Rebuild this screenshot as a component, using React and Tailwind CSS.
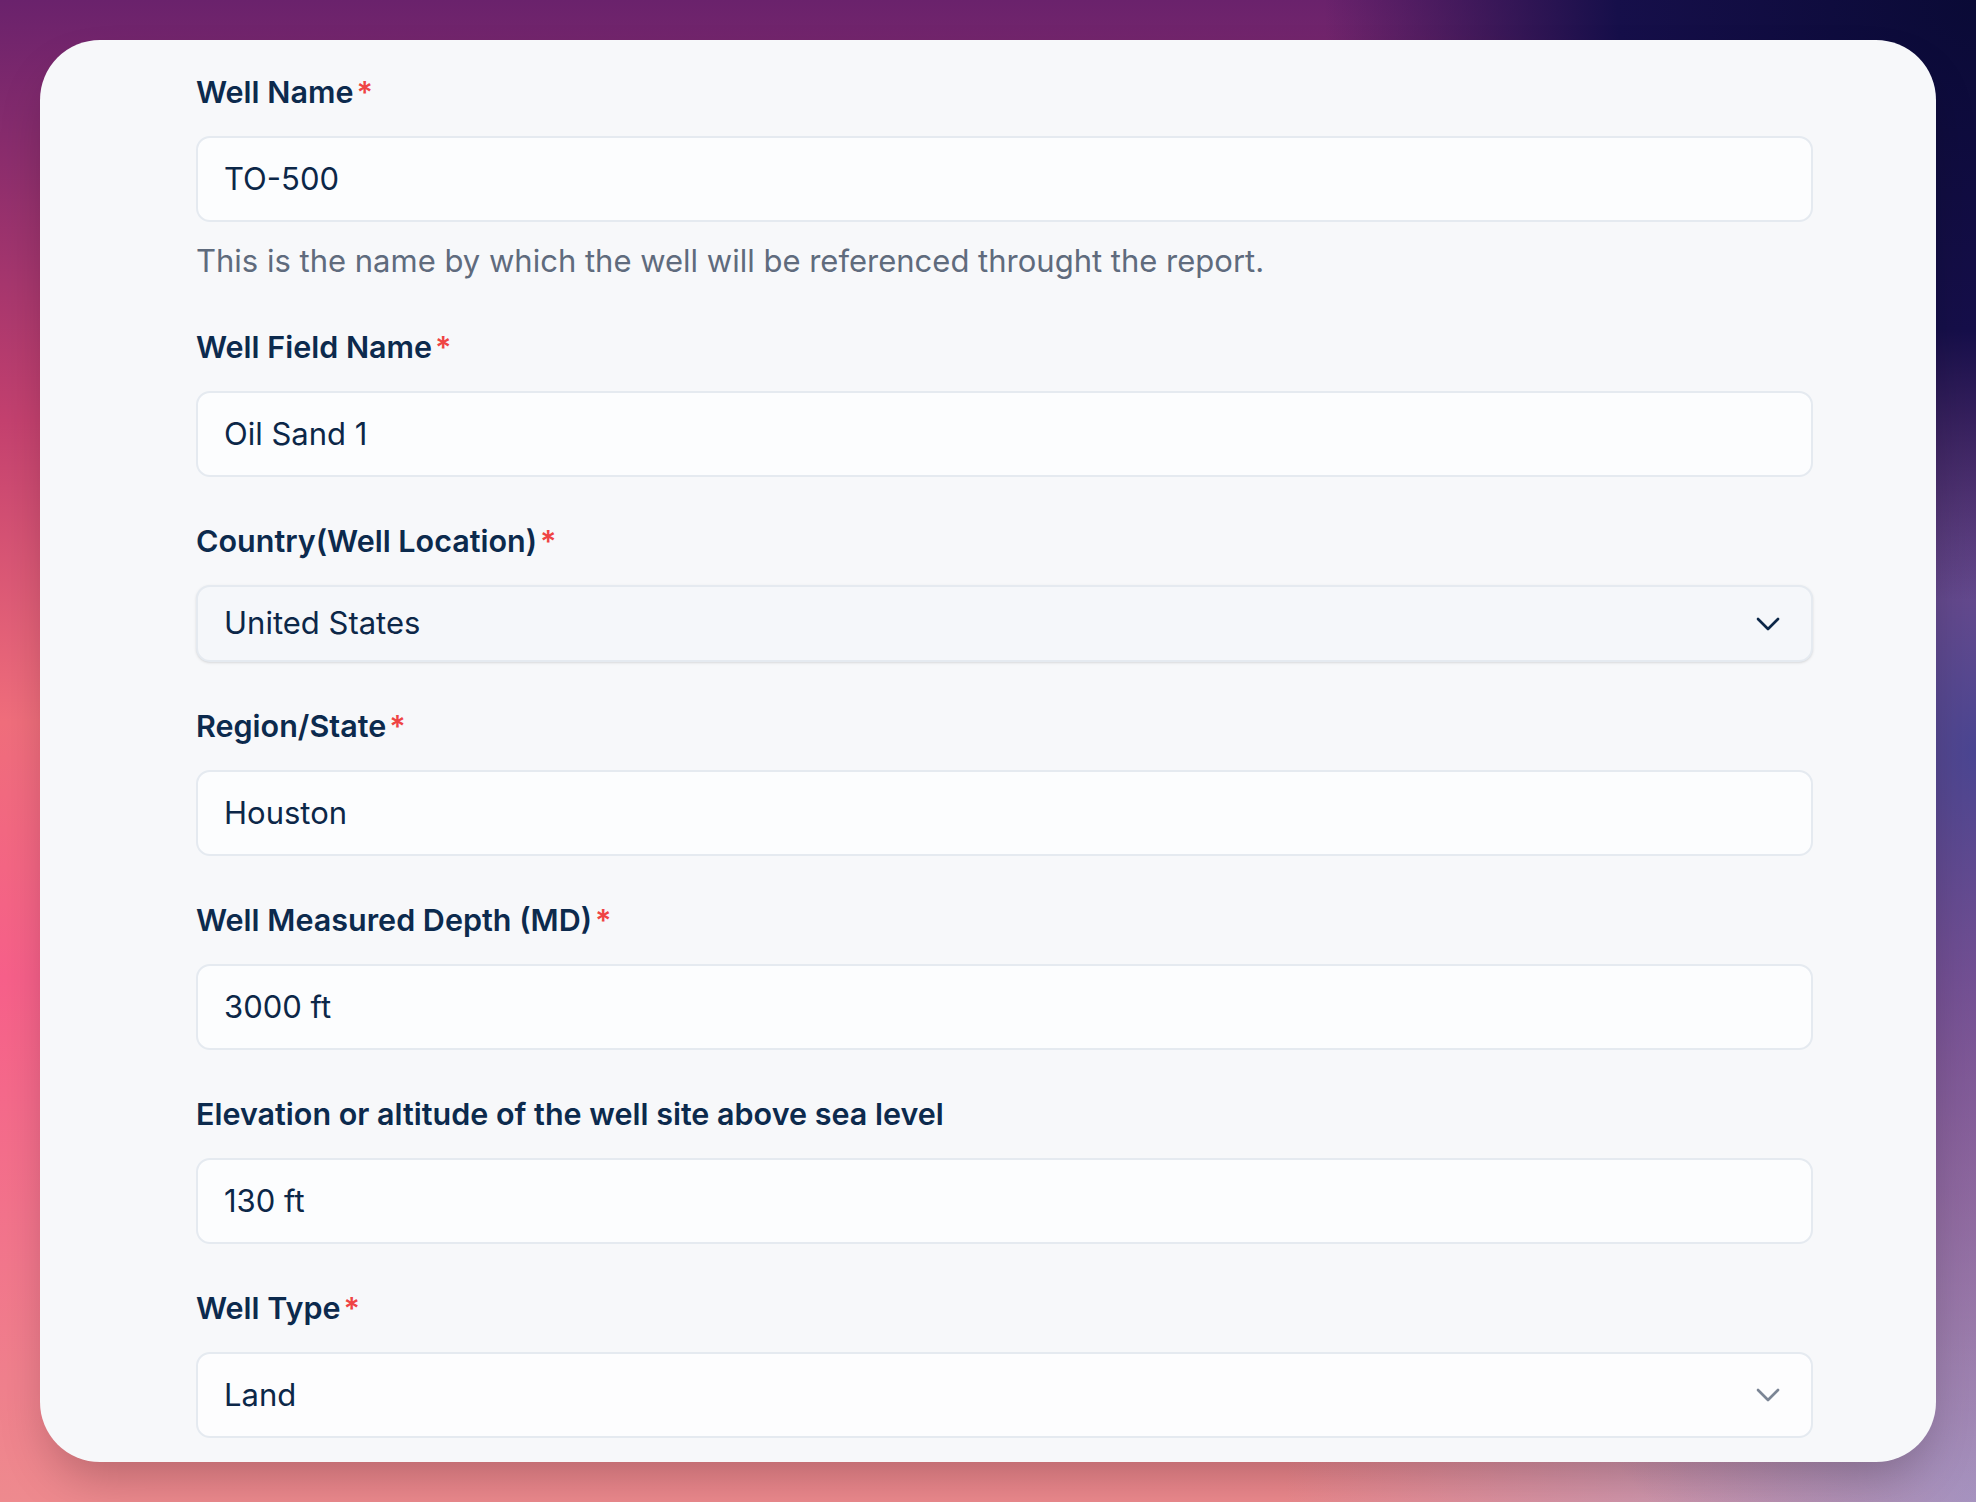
import { ChevronDown } from "lucide-react";

const fields = [
  { label: "Well Name", required: true, value: "TO-500", help: "This is the name by which the well will be referenced throught the report." },
  { label: "Well Field Name", required: true, value: "Oil Sand 1" },
  { label: "Country(Well Location)", required: true, value: "United States", kind: "select" },
  { label: "Region/State", required: true, value: "Houston" },
  { label: "Well Measured Depth (MD)", required: true, value: "3000 ft" },
  { label: "Elevation or altitude of the well site above sea level", required: false, value: "130 ft" },
  { label: "Well Type", required: true, value: "Land", kind: "native" },
];

function Label({ text, required }) {
  return (
    <div className="flex items-center h-[36px] mb-[26px] text-[30.5px] leading-[36px] font-semibold text-[#0c2a4d]">
      <span>{text}</span>
      {required && <span className="ml-[3px] text-[#ef4444]">*</span>}
    </div>
  );
}

function Field({ field }) {
  if (field.kind === "select") {
    return (
      <div className="flex items-center justify-between h-[77px] pl-[26px] pr-[23px] rounded-[14px] border-2 border-[#e5eaf0] bg-[#f5f7fa] shadow-sm text-[31px] text-[#0c2748]">
        <span>{field.value}</span>
        <ChevronDown size={40} strokeWidth={1.6} className="text-[#0c2748]" />
      </div>
    );
  }
  if (field.kind === "native") {
    return (
      <div className="flex items-center justify-between h-[86px] pl-[26px] pr-[23px] rounded-[14px] border-2 border-[#e5eaf0] bg-[#fdfdfe] text-[31px] text-[#0c2748]">
        <span>{field.value}</span>
        <ChevronDown size={40} strokeWidth={1.6} className="text-[#7b8595]" />
      </div>
    );
  }
  return (
    <div className="flex items-center h-[86px] pl-[26px] rounded-[14px] border-2 border-[#e5eaf0] bg-[#fcfdfe] text-[31px] text-[#0c2748]">
      {field.value}
    </div>
  );
}

export default function App() {
  return (
    <div
      className="min-h-screen p-[40px] bg-[radial-gradient(ellipse_33%_40%_at_100%_0%,#0a0a36_0%,#160f4a_55%,transparent_100%),radial-gradient(ellipse_30%_60%_at_100%_50%,#4a4592_0%,transparent_100%),radial-gradient(ellipse_35%_45%_at_100%_100%,#b8a2c8_0%,transparent_100%),linear-gradient(180deg,#6a226c_0%,#c4416f_28%,#f06e7c_48%,#f7608a_65%,#ee8a8e_100%)]"
      style={{ fontFamily: "Inter, 'Noto Sans', sans-serif" }}
    >
      <div className="h-[1422px] overflow-hidden rounded-[60px] bg-[#f7f8fa] shadow-2xl pt-[34px] pl-[156px] pr-[123px]">
        <div className="flex flex-col gap-[46px]">
          {fields.map((f) => (
            <div key={f.label} className="flex flex-col">
              <Label text={f.label} required={f.required} />
              <Field field={f} />
              {f.help && (
                <p className="mt-[21px] mb-[4px] text-[31px] leading-[36px] text-[#5f6b7d]">{f.help}</p>
              )}
            </div>
          ))}
        </div>
      </div>
    </div>
  );
}
